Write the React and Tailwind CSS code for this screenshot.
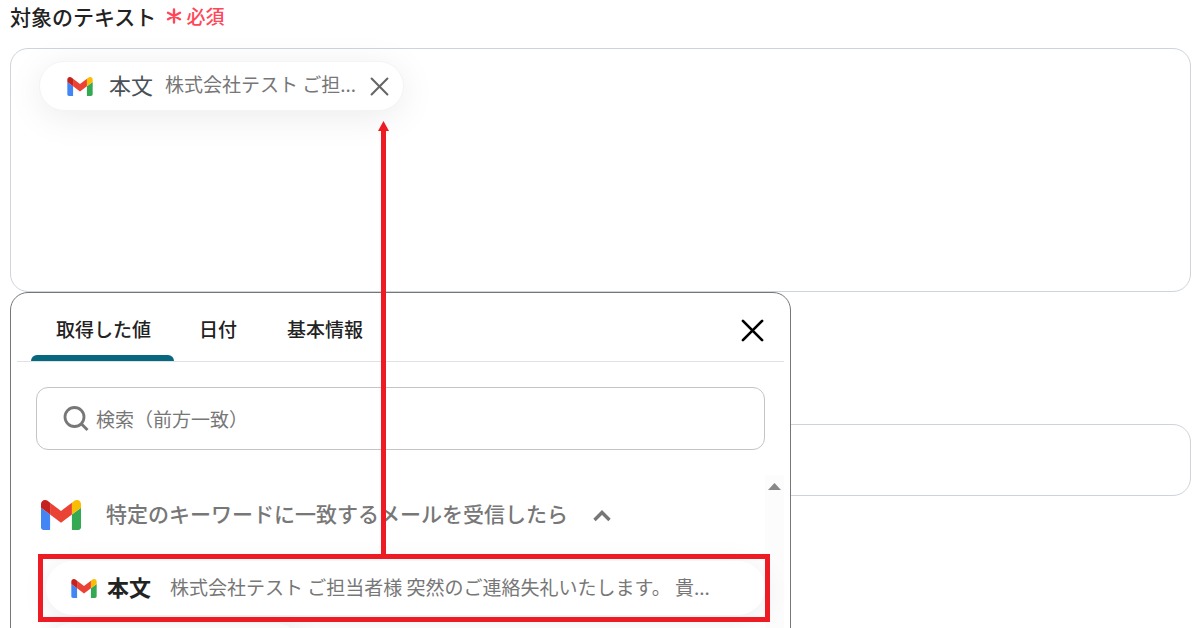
const GmailIcon = ({ className }) => (
  <svg className={className} viewBox="52 42 88 66" aria-hidden="true">
    <path fill="#4285f4" d="M58 108h14V74L52 59v43c0 3.32 2.69 6 6 6" />
    <path fill="#34a853" d="M120 108h14c3.32 0 6-2.69 6-6V59l-20 15" />
    <path fill="#fbbc04" d="M120 48v26l20-15v-8c0-7.42-8.47-11.65-14.4-7.2" />
    <path fill="#ea4335" d="M72 74V48l24 18 24-18v26L96 92" />
    <path fill="#c5221f" d="M52 51v8l20 15V48l-5.6-4.2c-5.94-4.45-14.4-.22-14.4 7.2" />
  </svg>
);

const CloseIcon = ({ className, strokeWidth }) => (
  <svg className={className} viewBox="0 0 24 24" fill="none" stroke="currentColor" strokeWidth={strokeWidth} strokeLinecap="round" aria-hidden="true">
    <path d="M2 2l20 20M22 2L2 22" />
  </svg>
);

const tabs = ['取得した値', '日付', '基本情報'];

const FieldLabel = () => (
  <div className="flex h-12 items-start gap-[10px]">
    <span id="target-label" className="text-[21px] leading-8 font-medium text-[#222]">対象のテキスト</span>
    <span className="flex items-center gap-1 text-[19px] leading-8 font-medium text-[#ff4757]">
      <svg className="h-4 w-4" viewBox="0 0 16 16" fill="none" stroke="currentColor" strokeWidth="2.4" strokeLinecap="round" aria-hidden="true">
        <path d="M8 1.5v13M2 4.8l12 6.4M14 4.8L2 11.2" />
      </svg>
      必須
    </span>
  </div>
);

const SelectedChip = () => (
  <div className="flex h-[50px] items-center rounded-full border border-[#f4f4f4] bg-white pr-[14px] pl-[27px] shadow-[0_6px_36px_rgba(0,0,0,0.08)]">
    <GmailIcon className="h-[19px] w-[26px]" />
    <span className="ml-4 pb-1 text-[22px] leading-8 font-normal text-[#495057]">本文</span>
    <span className="ml-3 pb-1 text-[19px] leading-8 text-[#777]">株式会社テスト ご担...</span>
    <button type="button" aria-label="削除" className="ml-[14px] text-[#666]">
      <CloseIcon className="h-[19px] w-[19px]" strokeWidth="2.6" />
    </button>
  </div>
);

// Red frame around the chosen row, with an arrow up to the chip it creates
const Callout = () => (
  <div className="pointer-events-none absolute -inset-y-[7px] -right-[5px] -left-2 z-10 border-[5px] border-[#ed1c24]">
    <svg className="absolute bottom-full left-[335px] h-[438px] w-[11px]" viewBox="0 0 11 438" fill="#ed1c24" aria-hidden="true">
      <path d="M5.5 0L11 10H8v428H3V10H0z" />
    </svg>
  </div>
);

const ValuePicker = () => (
  <section className="absolute top-full left-0 z-10 h-[400px] w-[781px] max-w-full rounded-t-[18px] border border-[#777] bg-white px-[6px]">
    <div className="flex h-[69px] items-center justify-between border-b border-[#dee2e6] pr-5 pl-[14px]">
      <div role="tablist" className="flex h-full">
        {tabs.map((tab, i) => (
          <button
            key={tab}
            type="button"
            role="tab"
            aria-selected={i === 0}
            className="relative px-[25px] pt-1 text-[19px] leading-8 font-medium text-[#222] first:pr-[23px]"
          >
            {tab}
            {i === 0 && <span className="absolute inset-x-0 bottom-0 h-[6px] rounded-t-md bg-[#06677f]" />}
          </button>
        ))}
      </div>
      <button type="button" aria-label="閉じる" className="pt-[6px] text-black">
        <CloseIcon className="h-[23px] w-[23px]" strokeWidth="2.8" />
      </button>
    </div>

    <div className="mx-[19px] mt-[25px] flex h-[63px] items-center gap-[7px] rounded-xl border border-[#c4c4c4] pl-[26px]">
      <svg className="h-[26px] w-[26px] shrink-0" viewBox="0 0 26 26" fill="none" stroke="#777" strokeWidth="2.8" aria-hidden="true">
        <circle cx="11.5" cy="11" r="9.5" />
        <path d="M18 17.5l6.5 6.5" />
      </svg>
      <input
        type="search"
        aria-label="検索"
        placeholder="検索（前方一致）"
        className="min-w-0 flex-1 bg-transparent text-[19px] leading-8 outline-none placeholder:text-[#777]"
      />
    </div>

    <div className="mt-[25px] flex">
      <div className="min-w-0 flex-1 pt-4 pl-6">
        <button type="button" aria-expanded="true" className="flex h-12 items-center text-[#777]">
          <GmailIcon className="h-[30px] w-10" />
          <span className="ml-[25px] pb-1 text-[21px] leading-8 font-medium">特定のキーワードに一致するメールを受信したら</span>
          <svg className="ml-6 h-5 w-5" viewBox="0 0 20 20" fill="none" stroke="currentColor" strokeWidth="3.4" aria-hidden="true">
            <path d="M2.5 15L10 7.5l7.5 7.5" />
          </svg>
        </button>
        <div className="relative mt-[22px] ml-[5px]">
          <button type="button" className="flex h-[54px] w-full items-center rounded-full bg-white pl-[25px] shadow-[0_4px_28px_rgba(0,0,0,0.08)]">
            <GmailIcon className="h-[19px] w-[26px]" />
            <span className="ml-[10px] pb-1 text-[22px] leading-8 font-bold text-[#222]">本文</span>
            <span className="ml-[19px] truncate pb-[2px] text-[19px] leading-8 text-[#777]">
              株式会社テスト ご担当者様 突然のご連絡失礼いたします。 貴...
            </span>
          </button>
          <Callout />
        </div>
        <div className="mt-2 ml-[5px] h-[54px] w-64 rounded-full bg-white shadow-[0_4px_28px_rgba(0,0,0,0.08)]" />
      </div>
      <div className="flex w-[19px] justify-center bg-[#fcfcfc] pt-2">
        <svg className="h-[7px] w-[13px]" viewBox="0 0 13 7" fill="#888" aria-hidden="true">
          <path d="M6.5 0L13 7H0z" />
        </svg>
      </div>
    </div>
  </section>
);

const App = () => (
  <main
    lang="ja"
    className="h-screen overflow-hidden bg-white pr-[9px] pl-[10px] font-['Noto_Sans_CJK_JP',sans-serif]"
  >
    <FieldLabel />
    <div className="relative">
      <div
        role="group"
        aria-labelledby="target-label"
        className="flex h-[244px] items-start rounded-[18px] border border-[#ced4da] px-7 pt-3"
      >
        <SelectedChip />
      </div>
      <ValuePicker />
    </div>
    <input
      type="text"
      aria-label="値"
      className="mt-[132px] block h-[72px] w-full rounded-[18px] border border-[#ced4da] px-7 text-[19px] outline-none"
    />
  </main>
);

export default App;
